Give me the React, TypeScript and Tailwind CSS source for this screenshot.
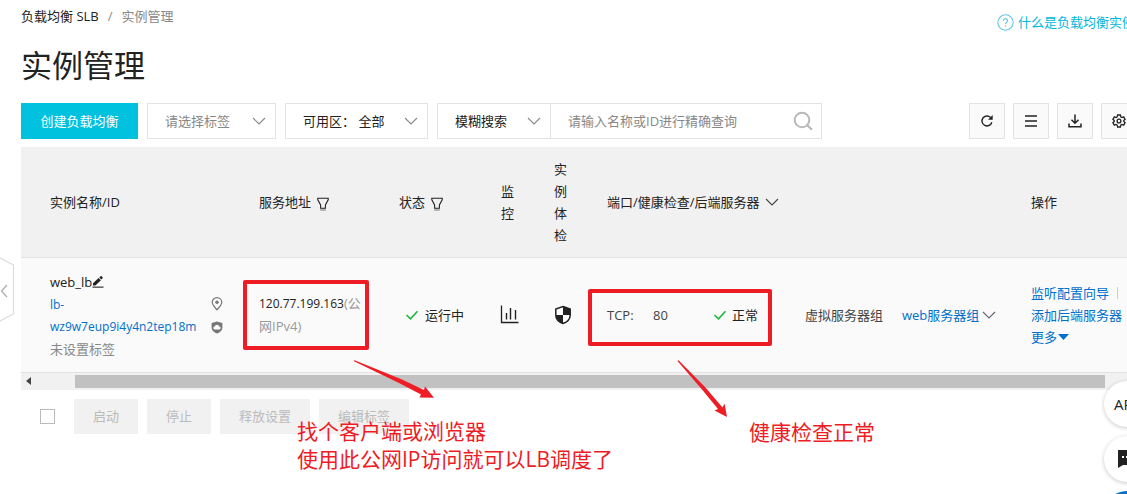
import type { ReactNode, SVGProps } from 'react';

const Svg = ({ children, ...props }: SVGProps<SVGSVGElement>) => (
  <svg fill="none" stroke="currentColor" aria-hidden="true" {...props}>
    {children}
  </svg>
);

const Chevron = ({ className }: { className?: string }) => (
  <Svg width="14" height="8" viewBox="0 0 14 8" className={className}>
    <path d="M1 1l6 6 6-6" strokeWidth="1.1" />
  </Svg>
);

const Funnel = () => (
  <Svg width="12" height="14" viewBox="0 0 12 14" className="mt-1">
    <path d="M.8 1.2h10.4v1.6L8.4 8v3.2H3.6V8L.8 2.8z" strokeWidth="1.1" />
    <path d="M3.2 13h5.6" stroke="#999" strokeWidth="1.4" />
  </Svg>
);

const Check = () => (
  <Svg width="14" height="10" viewBox="0 0 14 10" className="shrink-0 text-[#1eb83c]">
    <path d="M1.5 5l4 3.8 7-7.6" strokeWidth="1.6" />
  </Svg>
);

const Pencil = () => (
  <svg width="12" height="12" viewBox="0 0 12 12" fill="currentColor" aria-hidden="true">
    <path d="M1 9.6V7.3l5.6-5.2 2.3 2.2L3.4 9.6zM7.3 1.5L8.6.3c.3-.3.7-.3 1 0l1 1c.3.3.3.7 0 1L9.4 3.5z" />
    <path d="M.5 10.4h11V12H.5z" fill="#666" />
  </svg>
);

const Pin = () => (
  <Svg width="12" height="14" viewBox="0 0 12 14" className="text-[#777]">
    <path d="M6 12.8C3.6 10 1.2 7.8 1.2 5.2a4.8 4.6 0 0 1 9.6 0C10.8 7.8 8.4 10 6 12.8z" strokeWidth="1.2" />
    <circle cx="6" cy="5.3" r="1.7" fill="currentColor" stroke="none" />
  </Svg>
);

const CloudShield = () => (
  <svg width="12" height="13" viewBox="0 0 12 13" fill="#777" aria-hidden="true">
    <path d="M6 .4L11.4 2v4.4c0 2.8-2 4.7-5.4 6.2C2.6 11.1.6 9.2.6 6.4V2z" />
    <path d="M3.9 8.4a1.5 1.5 0 0 1-.2-3 2.4 2.4 0 0 1 4.6 0 1.5 1.5 0 0 1-.2 3z" fill="#fafafa" />
  </svg>
);

const Chart = () => (
  <Svg width="19" height="19" viewBox="0 0 19 19">
    <path d="M1.5.5v17h17" strokeWidth="1.3" />
    <path d="M6.5 8v6.5M10.5 3v11.5M15.5 5v9.5" strokeWidth="1.4" />
  </Svg>
);

const QuarterShield = () => (
  <svg width="18" height="20" viewBox="0 0 18 20" aria-hidden="true">
    <path d="M9 1.5L16.2 4v6c0 4.2-3 7-7.2 8.5C4.8 17 1.8 14.2 1.8 10V4z" fill="#fff" stroke="#222" strokeWidth="1.5" />
    <path d="M9 1.5L16.2 4v6H9zM9 10v8.5C4.8 17 1.8 14.2 1.8 10z" fill="#222" />
  </svg>
);

const Refresh = () => (
  <Svg width="14" height="14" viewBox="0 0 14 14">
    <path d="M11.8 8.2A5 5 0 1 1 10.6 3.5" strokeWidth="1.4" />
    <path d="M12.7 1v4.7H8z" fill="currentColor" stroke="none" />
  </Svg>
);

const Lines = () => (
  <Svg width="14" height="14" viewBox="0 0 14 14">
    <path d="M1 2h12M1 7h12M1 12h12" strokeWidth="1.5" />
  </Svg>
);

const Download = () => (
  <Svg width="14" height="14" viewBox="0 0 14 14">
    <path d="M7 .5v8.5M3.5 5.8L7 9.2l3.5-3.4M1 9.5v3.3h12V9.5" strokeWidth="1.5" />
  </Svg>
);

const Gear = () => (
  <Svg width="14" height="14" viewBox="0 0 14 14">
    <path d="M5.6 1h2.8l.4 1.8 1.2.7 1.7-.6 1.4 2.4L11.8 6.5v1l1.3 1.2-1.4 2.4-1.7-.6-1.2.7-.4 1.8H5.6l-.4-1.8-1.2-.7-1.7.6L.9 8.7l1.3-1.2v-1L.9 5.3l1.4-2.4 1.7.6 1.2-.7z" strokeWidth="1.3" />
    <circle cx="7" cy="7" r="1.9" strokeWidth="1.3" />
  </Svg>
);

const Magnifier = () => (
  <Svg width="20" height="20" viewBox="0 0 20 20" className="text-[#b8b8b8]">
    <circle cx="9" cy="9" r="7.3" strokeWidth="2" />
    <path d="M14 14l5 4.8" strokeWidth="2.2" />
  </Svg>
);

function SelectBox({ label, text, className }: { label: string; text: string; className: string }) {
  return (
    <div className={`grid h-9 items-center border border-[#e3e3e3] bg-white ${className}`}>
      <select aria-label={label} className="col-start-1 row-start-1 h-full w-full appearance-none bg-transparent pr-8 pl-[17px] outline-none">
        <option>{text}</option>
      </select>
      <Chevron className="pointer-events-none col-start-1 row-start-1 mr-[9px] justify-self-end text-[#888]" />
    </div>
  );
}

function ToolButton({ label, children }: { label: string; children: ReactNode }) {
  return (
    <button aria-label={label} className="flex size-9 items-center justify-center border border-[#e3e3e3] bg-[#fafafa]">
      {children}
    </button>
  );
}

const batchActions = ['启动', '停止', '释放设置', '编辑标签'];

export default function App() {
  return (
    <div className="relative min-h-screen overflow-hidden bg-white pb-[60px] font-['Open_Sans','Noto_Sans_CJK_SC',sans-serif] text-[13px] leading-[22px] text-[#222]">
      <main className="-mr-[10px] pl-[21px]">
        <header className="flex items-start justify-between pt-[5px]">
          <div>
            <nav aria-label="面包屑" className="flex gap-[9px]">
              <a href="#slb">负载均衡 SLB</a>
              <span className="text-[#888]">/</span>
              <span className="text-[#888]">实例管理</span>
            </nav>
            <h1 className="mt-4 text-[31px] leading-[44px]">实例管理</h1>
          </div>
          <a href="#help" className="mt-[6px] mr-[2px] flex items-center gap-1 whitespace-nowrap text-[#00b7dc]">
            <Svg width="17" height="17" viewBox="0 0 17 17" className="text-[#62c6e0]">
              <circle cx="8.5" cy="8.5" r="7.7" strokeWidth="1.1" />
              <path d="M6.5 6.8a2 2 0 1 1 3 1.6c-.8.5-1 .8-1 1.6M8.5 11.2v1.3" strokeWidth="1.2" />
            </Svg>
            什么是负载均衡实例
          </a>
        </header>

        <div className="mt-4 flex items-start">
          <button className="h-9 w-[117px] bg-[#00c1de] text-white">创建负载均衡</button>
          <SelectBox label="标签" text="请选择标签" className="ml-[9px] w-[129px] text-[#888]" />
          <SelectBox label="可用区" text="可用区： 全部" className="ml-[9px] w-[143px]" />
          <form role="search" className="ml-[9px] flex">
            <SelectBox label="搜索方式" text="模糊搜索" className="w-[114px]" />
            <div className="-ml-px flex h-9 w-[272px] items-center border border-[#e3e3e3] pr-2 pl-[17px]">
              <input
                aria-label="搜索实例"
                placeholder="请输入名称或ID进行精确查询"
                className="min-w-0 flex-1 outline-none placeholder:text-[#888]"
              />
              <button type="button" aria-label="搜索"><Magnifier /></button>
            </div>
          </form>
          <div className="ml-auto flex gap-2">
            <ToolButton label="刷新"><Refresh /></ToolButton>
            <ToolButton label="列表"><Lines /></ToolButton>
            <ToolButton label="下载"><Download /></ToolButton>
            <ToolButton label="设置"><Gear /></ToolButton>
          </div>
        </div>

        <div className="mt-2 overflow-hidden">
          <table className="w-full min-w-[1160px] table-fixed border-collapse text-left">
            <colgroup>
              <col className="w-[222px]" />
              <col className="w-[140px]" />
              <col className="w-[102px]" />
              <col className="w-[53px]" />
              <col className="w-[53px]" />
              <col className="w-[424px]" />
              <col />
            </colgroup>
            <thead className="bg-[#f1f1f1]">
              <tr className="h-[110px] border-b border-[#e3e3e3] *:font-normal">
                <th className="pr-4 pl-[29px]">实例名称/ID</th>
                <th className="px-4"><span className="flex items-center gap-[6px]">服务地址 <Funnel /></span></th>
                <th className="px-4"><span className="flex items-center gap-[6px]">状态 <Funnel /></span></th>
                <th className="px-4">监控</th>
                <th className="px-4">实例体检</th>
                <th className="px-4"><span className="flex items-center gap-[5px]">端口/健康检查/后端服务器 <Chevron className="text-[#444]" /></span></th>
                <th className="px-4">操作</th>
              </tr>
            </thead>
            <tbody className="bg-[#fafafa]">
              <tr className="h-[115px] border-b border-[#e3e3e3]">
                <td className="pt-px pr-4 pl-[29px]">
                  <div className="flex items-center">web_lb<button aria-label="编辑名称"><Pencil /></button></div>
                  <div className="flex items-center">
                    <a href="#instance" className="w-[161px] pt-px text-xs leading-[22px] text-[#0070cc]">lb-<br />wz9w7eup9i4y4n2tep18m</a>
                    <span className="flex flex-col gap-[10px] pt-px"><Pin /><CloudShield /></span>
                  </div>
                  <div className="text-[#888]">未设置标签</div>
                </td>
                <td className="relative px-4">
                  <div className="pt-px text-xs leading-[22px] break-all">120.77.199.163<span className="text-[13px] text-[#999]">(公<wbr />网IPv4)</span></div>
                  <div className="absolute inset-y-[22px] left-0 w-[126px] rounded-xs border-4 border-[#ee1c25]" />
                </td>
                <td className="px-4"><span className="ml-[6px] flex items-center gap-[6px]"><Check />运行中</span></td>
                <td className="px-[15px]"><a href="#monitor" aria-label="监控"><Chart /></a></td>
                <td className="px-4"><a href="#diagnose" aria-label="实例体检"><QuarterShield /></a></td>
                <td className="relative px-4">
                  <div className="grid grid-cols-[46px_60px_92px_97px_auto] items-center">
                    <span className="text-[#444]">TCP:</span>
                    <span className="text-[#444]">80</span>
                    <span className="flex items-center gap-[5px]"><Check />正常</span>
                    <span className="text-[#444]">虚拟服务器组</span>
                    <a href="#group" className="flex items-center gap-[3px] text-[#0070cc]">web服务器组<Chevron className="text-[#666]" /></a>
                  </div>
                  <div className="absolute top-[31px] bottom-[26px] -left-[3px] w-[184px] rounded-xs border-4 border-[#ee1c25]" />
                </td>
                <td className="px-4 pt-px text-[#0070cc]">
                  <div className="flex items-center gap-2"><a href="#guide">监听配置向导</a><span className="h-3 w-px bg-[#ccc]" /></div>
                  <div><a href="#add">添加后端服务器</a></div>
                  <button className="flex items-center gap-px">更多
                    <svg width="11" height="6" viewBox="0 0 11 6" fill="currentColor" aria-hidden="true"><path d="M0 0h11L5.5 6z" /></svg>
                  </button>
                </td>
              </tr>
            </tbody>
          </table>
          <div className="flex h-[17px] items-center bg-[#f1f1f1] pr-[10px] pl-[5px]">
            <svg width="5" height="8" viewBox="0 0 5 8" fill="#444" aria-hidden="true"><path d="M5 0v8L0 4z" /></svg>
            <div className="mr-[22px] ml-[44px] h-[13px] flex-1 bg-[#c1c1c1]" />
          </div>
        </div>

        <div className="mt-[9px] flex items-center gap-[9px] pl-[19px]">
          <input type="checkbox" aria-label="全选" className="mr-[10px] size-[15px] appearance-none border border-[#bbb] bg-white" />
          {batchActions.map((name) => (
            <button key={name} disabled className="h-[35px] bg-[#f1f1f1] px-[19px] text-[#bbb]">{name}</button>
          ))}
        </div>
      </main>

      <button aria-label="收起侧栏" className="absolute top-[257px] left-0">
        <Svg width="15" height="66" viewBox="0 0 15 66">
          <path d="M-1 .5L13.5 8v49L-1 64.5" fill="#fff" stroke="#ddd" strokeWidth="1.2" />
          <path d="M7 28l-5.5 6L7 40" stroke="#aaa" strokeWidth="1.2" />
        </Svg>
      </button>

      <svg className="absolute top-[358px] left-[350px] text-[#ee1c25]" width="85" height="42" viewBox="350 358 85 42" fill="currentColor" aria-hidden="true">
        <path d="M353.5 361L354.500 360.300L402 379.500l22 10.500 1-3.500L434 397.800l-14.500-.2 1.500-3.100L399 383z" />
      </svg>
      <svg className="absolute top-[358px] left-[675px] text-[#ee1c25]" width="55" height="62" viewBox="675 358 55 62" fill="currentColor" aria-hidden="true">
        <path d="M677.500 361l1-.7L705 387l17.500 20.500 2-4 2.500 13.500-12.500-6.500 3.500-1.500L702 389.500z" />
      </svg>
      <p className="absolute top-[417px] left-[297px] text-[21px] leading-7 whitespace-nowrap text-[#ee1c25]">找个客户端或浏览器<br />使用此公网IP访问就可以LB调度了</p>
      <p className="absolute top-[418px] left-[749px] text-[21px] leading-7 whitespace-nowrap text-[#ee1c25]">健康检查正常</p>

      <aside className="absolute top-[381px] -right-[23px] flex flex-col gap-[9px]">
        <button className="flex size-[46px] items-center rounded-full bg-white pl-[10px] text-[15px] shadow-[0_1px_4px_rgba(0,0,0,0.22)]">API</button>
        <button aria-label="在线咨询" className="flex size-[46px] items-center rounded-full bg-white pl-[14px] shadow-[0_1px_4px_rgba(0,0,0,0.22)]">
          <svg width="20" height="18" viewBox="0 0 20 18" aria-hidden="true">
            <path d="M0 0h18v15H5l-5 3z" fill="#222" />
            <path d="M4 6h2v2H4zM8 6h2v2H8zM12 6h2v2h-2z" fill="#fff" />
          </svg>
        </button>
        <button aria-label="帮助" className="size-[46px] rounded-full bg-[#0070cc]" />
      </aside>
    </div>
  );
}
